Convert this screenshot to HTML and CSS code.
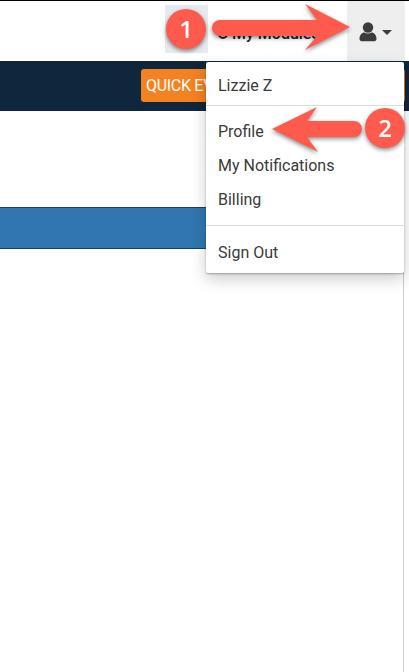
FILE: index.html
```html
<!DOCTYPE html>
<html lang="en">
<head>
    <meta charset="UTF-8">
    <meta name="viewport" content="width=device-width, initial-scale=1.0">
    <title>Profile</title>
    <link rel="stylesheet" href="styles.css">
</head>
<body>
    <div class="main">
        <div class="topbar">
            <div class="thumb"></div>
            <a class="modules"><span class="modules_icon"></span>My Modules</a>
            <button class="user_btn">
                <svg class="user_icon" width="18" height="20" viewBox="0 0 18 20">
                    <circle cx="9" cy="5.5" r="5.2"/>
                    <path d="M0.5 17c0-4 2.400-6.500 5-6.500c1 .6 2.100 .9 3.500 .9s2.500-.3 3.500-.9c2.600 0 5 2.500 5 6.500c0 1.300-1 2.200-2 2.200H2.500c-1 0-2-.9-2-2.200z"/>
                </svg>
                <span class="caret"></span>
            </button>
        </div>
        <div class="navbar">
            <button class="btn_quick">QUICK EVENT</button>
        </div>
        <div class="content">
            <div class="band"></div>
        </div>

        <div class="dropdown">
            <div class="dropdown_name">Lizzie Z</div>
            <a class="dropdown_item dropdown_first">Profile</a>
            <a class="dropdown_item">My Notifications</a>
            <a class="dropdown_item">Billing</a>
            <a class="dropdown_item dropdown_last">Sign Out</a>
        </div>

        <svg class="notes" width="409" height="672" viewBox="0 0 409 672">
            <g class="note">
                <path d="M220 20H317L305 4L350 27L305 50L317 36H220a8 8 0 0 1 0-16z"/>
                <circle cx="186" cy="29" r="20"/>
                <text x="186" y="38">1</text>
            </g>
            <g class="note">
                <path d="M272 129L317 107L307 121H354a8 8 0 0 1 0 16H307L318 152z"/>
                <circle cx="385" cy="128" r="20"/>
                <text x="385" y="137">2</text>
            </g>
        </svg>
    </div>
</body>
</html>
```
FILE: styles.css
```css
* {
    margin: 0;
    padding: 0;
    box-sizing: border-box;
}
body {
    font-family: Roboto, "Liberation Sans", sans-serif;
    background-color: #fff;
    overflow: hidden;
}
.main {
    position: relative;
    width: 409px;
    height: 672px;
    overflow: hidden;
}
.topbar {
    display: flex;
    align-items: stretch;
    height: 61px;
    border-top: 1px solid #000;
    padding-right: 4px;
}
.thumb {
    width: 43px;
    height: 48px;
    margin: 4px 0 0 165px;
    background-color: #e6eaee;
}
.modules {
    display: flex;
    align-items: baseline;
    gap: 4px;
    width: 139px;
    padding: 23px 0 0 10px;
    font-size: 16px;
    font-weight: 500;
    color: #222;
    white-space: nowrap;
}
.modules_icon {
    width: 10px;
    height: 10px;
    border: 2px solid #222;
    border-radius: 50%;
}
.user_btn {
    display: flex;
    align-items: center;
    gap: 5px;
    width: 58px;
    padding-left: 12px;
    border: none;
    background-color: #eee;
}
.user_icon {
    fill: #3c3c3c;
    margin-top: 1px;
}
.caret {
    width: 0;
    height: 0;
    margin-top: 3px;
    border-top: 5px solid #3c3c3c;
    border-left: 5px solid transparent;
    border-right: 5px solid transparent;
}
.navbar {
    display: flex;
    justify-content: flex-end;
    height: 50px;
    padding: 8px 4px 0 0;
    background-color: #10263d;
}
.btn_quick {
    width: 264px;
    height: 33px;
    padding-left: 5px;
    border: none;
    border-radius: 3px;
    background-color: #f58220;
    color: #fff;
    font-family: Roboto, "Liberation Sans", sans-serif;
    font-size: 16px;
    font-weight: 400;
    letter-spacing: -0.3px;
    text-align: left;
}
.content {
    height: 561px;
    margin-right: 5px;
    padding-top: 96px;
    border-right: 1px solid #ccc;
}
.band {
    height: 42px;
    background-color: #3176b0;
    border-top: 1px solid #1a3f5c;
    border-bottom: 1px solid #1a3f5c;
}
.dropdown {
    position: absolute;
    top: 62px;
    left: 206px;
    width: 198px;
    height: 211px;
    background-color: #fff;
    border-radius: 2px;
    box-shadow: 0 1px 2px rgba(0, 0, 0, 0.3), 0 6px 16px rgba(0, 0, 0, 0.2);
    color: #3a3a3a;
    font-size: 16px;
}
.dropdown_name {
    height: 44px;
    padding: 14px 12px 0;
    line-height: 19px;
    border-bottom: 1px solid #ddd;
}
.dropdown_item {
    display: block;
    height: 34px;
    padding: 0 12px;
    line-height: 34px;
}
.dropdown_first {
    margin-top: 9px;
}
.dropdown_last {
    margin-top: 8px;
    padding-top: 10px;
    height: 44px;
    border-top: 1px solid #ddd;
}
.notes {
    position: absolute;
    top: 0;
    left: 0;
    pointer-events: none;
}
.note {
    fill: #fe5a4d;
    filter: drop-shadow(0 2px 2px rgba(0, 0, 0, 0.45));
}
.note text {
    fill: #fff;
    font-family: "Open Sans", "Liberation Sans", sans-serif;
    font-size: 24px;
    font-weight: 600;
    text-anchor: middle;
}
```
